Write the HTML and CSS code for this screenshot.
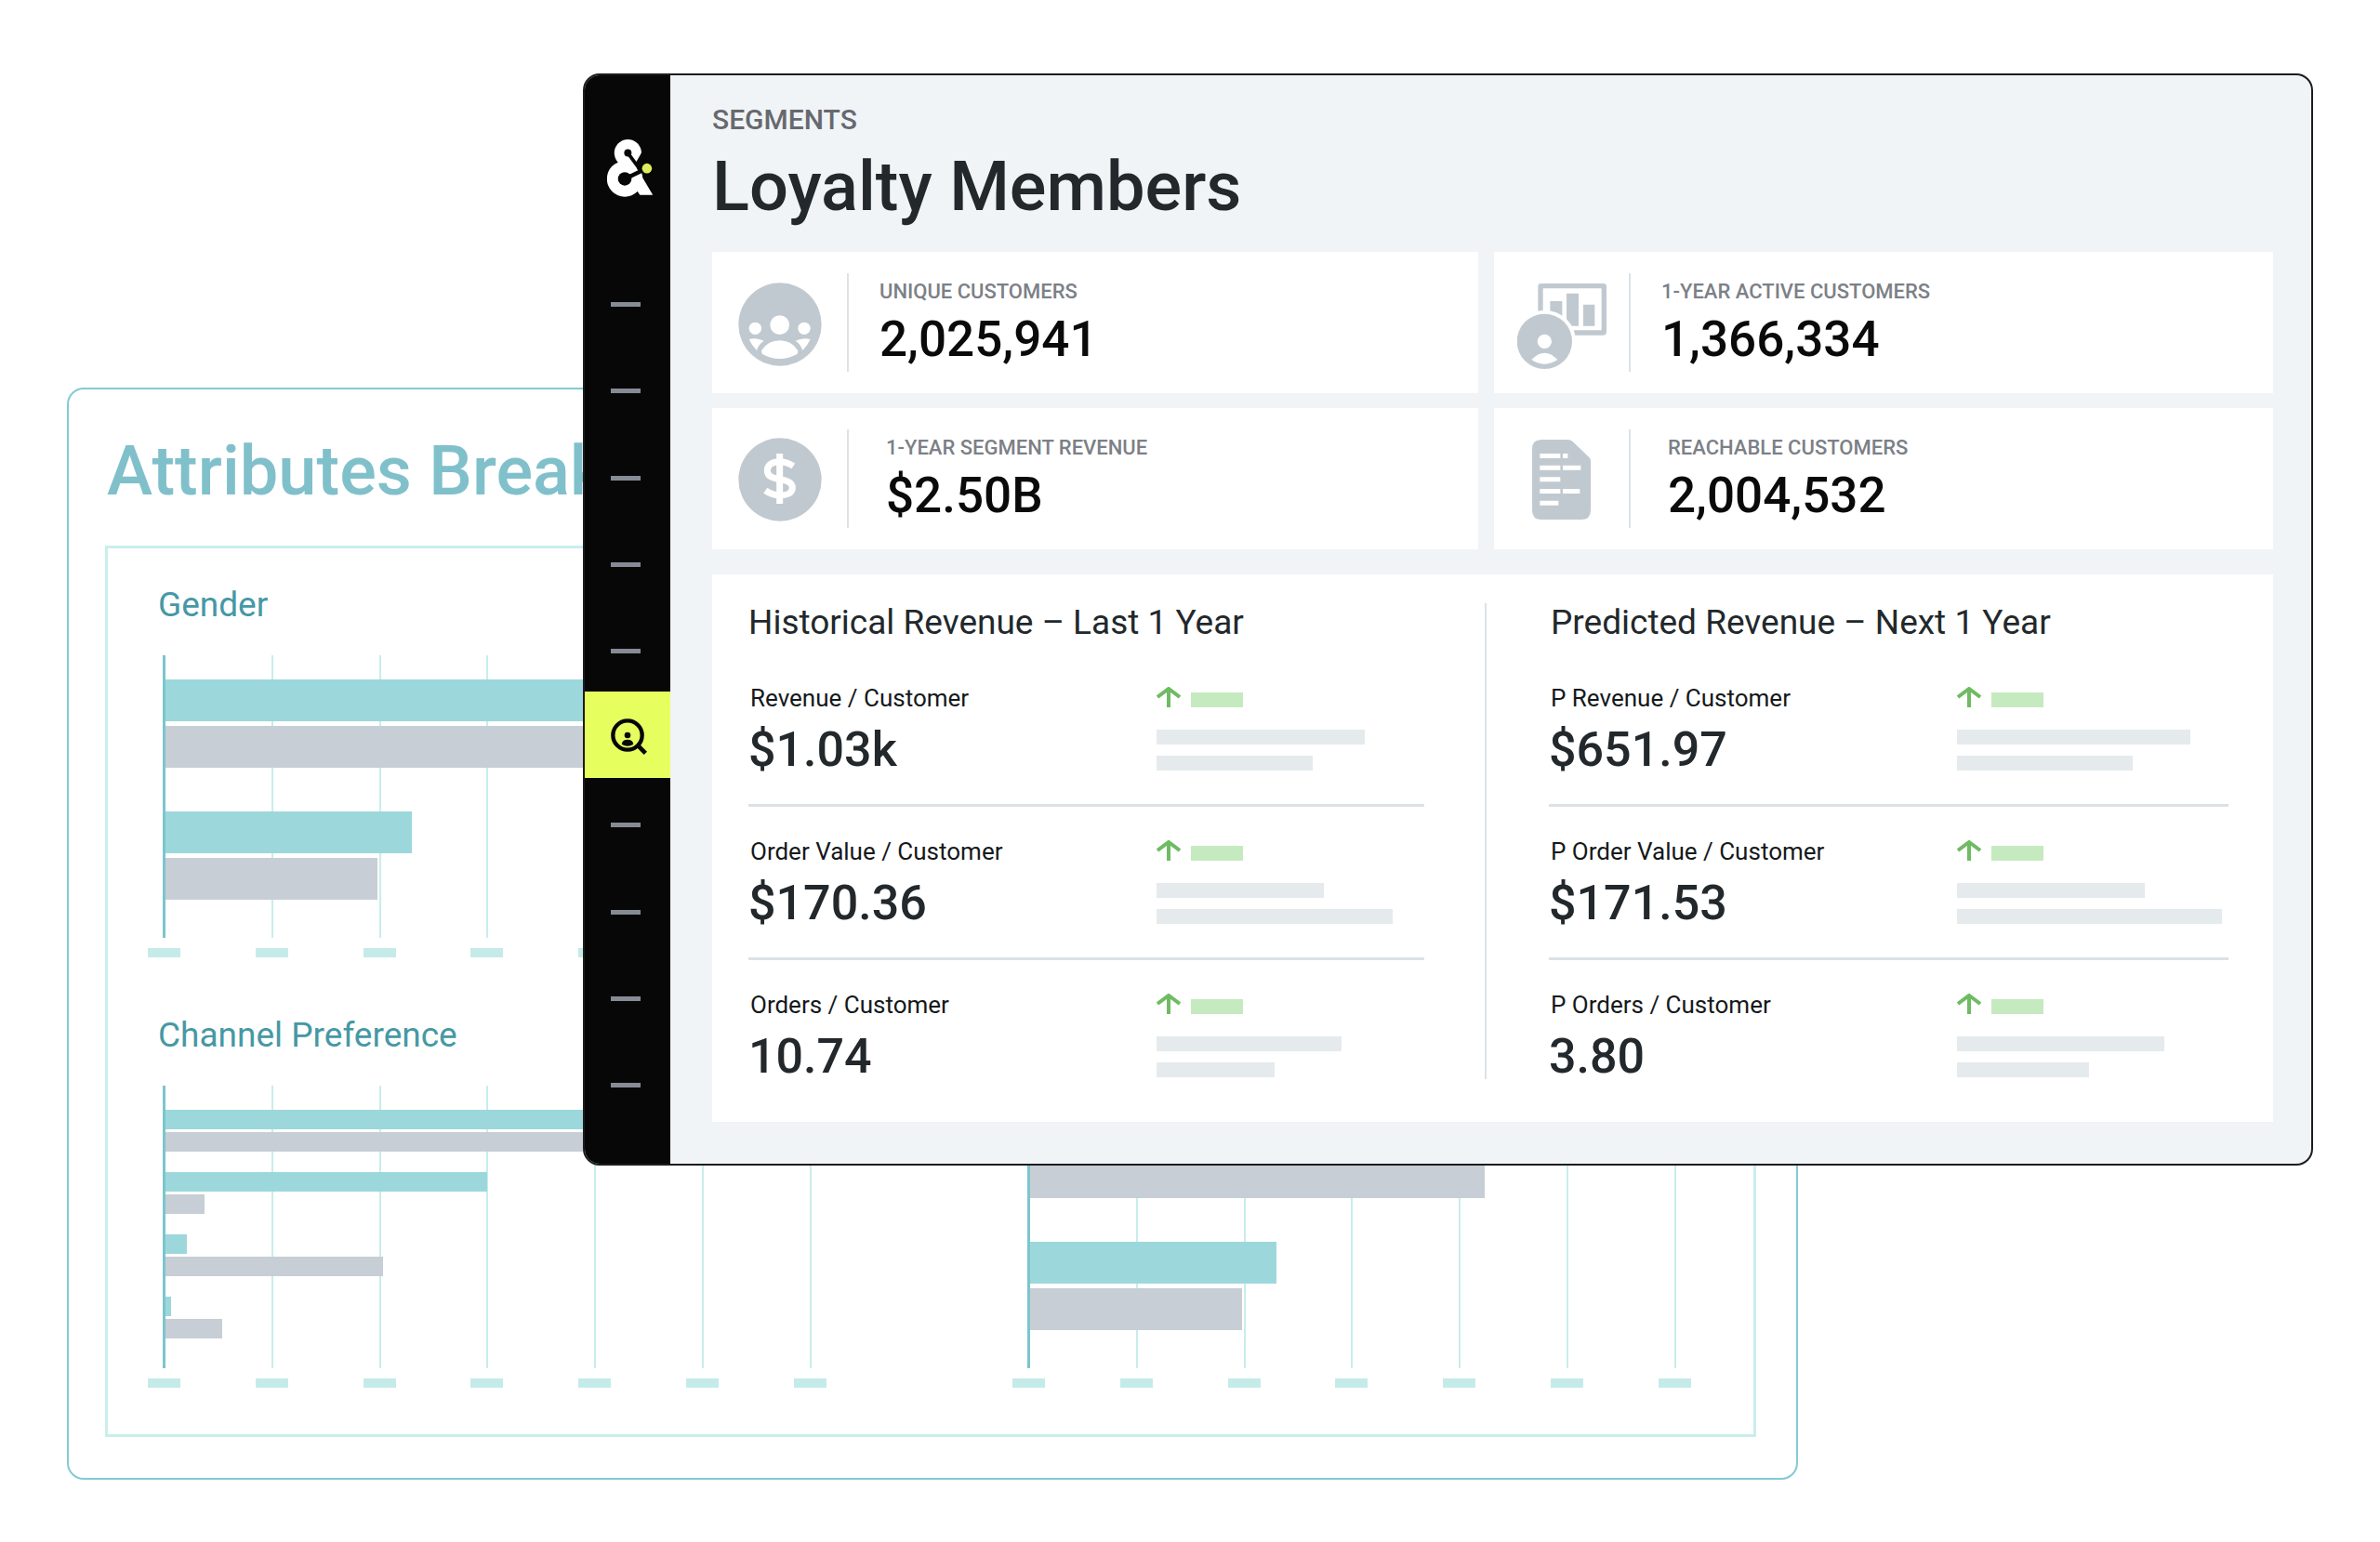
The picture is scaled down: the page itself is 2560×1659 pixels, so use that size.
FILE: index.html
```html
<!DOCTYPE html>
<html lang="en">
<head>
<meta charset="utf-8">
<meta name="viewport" content="width=device-width, initial-scale=1">
<title>Loyalty Members</title>
<link rel="stylesheet" href="styles.css">
</head>
<body>
<main class="stage">

  <section class="window attributes">
    <h2 class="title attributes-title">Attributes Break</h2>
    <div class="attributes-panel">
      <article class="chart">
        <h3 class="chart-title">Gender</h3>
        <div class="plot">
          <div class="grid-lines"><i class="axis"></i><i></i><i></i><i></i><i></i><i></i><i></i></div>
          <div class="bars bars-large">
            <div class="pair"><span class="bar" style="width:75%"></span><span class="bar base" style="width:70.3%"></span></div>
            <div class="pair"><span class="bar" style="width:38.1%"></span><span class="bar base" style="width:32.8%"></span></div>
          </div>
        </div>
        <div class="ticks"><i></i><i></i><i></i><i></i><i></i><i></i><i></i></div>
      </article>
      <article class="chart chart-second-row">
        <h3 class="chart-title">Channel Preference</h3>
        <div class="plot">
          <div class="grid-lines"><i class="axis"></i><i></i><i></i><i></i><i></i><i></i><i></i></div>
          <div class="bars bars-small">
            <div class="pair"><span class="bar" style="width:75%"></span><span class="bar base" style="width:70%"></span></div>
            <div class="pair"><span class="bar" style="width:49.8%"></span><span class="bar base" style="width:6.1%"></span></div>
            <div class="pair"><span class="bar" style="width:3.3%"></span><span class="bar base" style="width:33.7%"></span></div>
            <div class="pair"><span class="bar" style="width:0.9%"></span><span class="bar base" style="width:8.8%"></span></div>
          </div>
        </div>
        <div class="ticks"><i></i><i></i><i></i><i></i><i></i><i></i><i></i></div>
      </article>
      <article class="chart chart-second-row chart-untitled">
        <div class="plot">
          <div class="grid-lines"><i class="axis"></i><i></i><i></i><i></i><i></i><i></i><i></i></div>
          <div class="bars bars-large">
            <div class="pair"><span class="bar" style="width:75%"></span><span class="bar base" style="width:70.3%"></span></div>
            <div class="pair"><span class="bar" style="width:38.1%"></span><span class="bar base" style="width:32.8%"></span></div>
          </div>
        </div>
        <div class="ticks"><i></i><i></i><i></i><i></i><i></i><i></i><i></i></div>
      </article>
    </div>
  </section>

  <section class="window segments">
    <aside class="sidebar">
      <svg class="logo" viewBox="0 0 150 187" aria-hidden="true">
        <circle cx="67" cy="44" r="44" fill="#fff"/>
        <circle cx="57" cy="128" r="58" fill="#fff"/>
        <path d="M88 84 L111 44 L118 84 L104 112 Z" fill="#070707"/>
        <path d="M60 50 L84 50 L98 98 L110 116 L148 180 H106 L98 168 L70 100 Z" fill="#fff"/>
        <path d="M67 44 L103 93" stroke="#070707" stroke-width="11"/>
        <path d="M57 128 L112 102" stroke="#070707" stroke-width="13"/>
        <circle cx="67" cy="44" r="12" fill="#070707"/>
        <circle cx="57" cy="128" r="22" fill="#070707"/>
        <circle cx="129" cy="94" r="16" fill="#dcee5c"/>
      </svg>
      <nav class="nav">
        <button class="nav-item" type="button"></button>
        <button class="nav-item" type="button"></button>
        <button class="nav-item" type="button"></button>
        <button class="nav-item" type="button"></button>
        <button class="nav-item" type="button"></button>
        <button class="nav-item active" type="button">
          <svg class="nav-icon" viewBox="0 0 117 117" aria-hidden="true">
            <circle cx="54" cy="54" r="47" fill="none" stroke="#070707" stroke-width="13"/>
            <path d="M86 86 L112 112" stroke="#070707" stroke-width="14"/>
            <circle cx="54" cy="54" r="10" fill="#070707"/>
            <path d="M35 83 Q37 68 54 68 Q71 68 73 83 Q54 95 35 83 Z" fill="#070707"/>
          </svg>
        </button>
        <button class="nav-item" type="button"></button>
        <button class="nav-item" type="button"></button>
        <button class="nav-item" type="button"></button>
        <button class="nav-item" type="button"></button>
      </nav>
    </aside>

    <div class="content">
      <p class="eyebrow">SEGMENTS</p>
      <h1 class="title">Loyalty Members</h1>

      <div class="cards">
        <article class="card">
          <div class="card-icon">
            <svg width="90" height="90" viewBox="0 0 270 270" aria-hidden="true">
              <circle cx="135" cy="135" r="134" fill="#c1c9d0"/>
              <g fill="#fff">
                <circle cx="134" cy="137" r="31"/>
                <circle cx="55" cy="148" r="20"/>
                <circle cx="213" cy="148" r="20"/>
                <path d="M75 220 Q95 187 134 187 Q173 187 193 220 L191 230 Q134 262 77 230 Z"/>
                <path d="M35 183 Q60 176 83 188 Q65 200 60 219 Q44 203 35 183 Z"/>
                <path d="M233 183 Q208 176 185 188 Q203 200 208 219 Q224 203 233 183 Z"/>
              </g>
            </svg>
          </div>
          <div class="card-text">
            <p class="card-label">UNIQUE CUSTOMERS</p>
            <p class="card-value">2,025,941</p>
          </div>
        </article>
        <article class="card">
          <div class="card-icon">
            <svg width="96" height="96" viewBox="0 -12 288 288" aria-hidden="true">
              <rect x="75" y="8" width="205" height="151" rx="2" fill="none" stroke="#c1c9d0" stroke-width="16"/>
              <path d="M106 57h39v80h-39zM159 32h39v105h-39zM213 68h37v69h-37z" fill="#c1c9d0"/>
              <circle cx="88" cy="187" r="101" fill="#fff"/>
              <circle cx="88" cy="187" r="89" fill="#c1c9d0"/>
              <circle cx="88" cy="187" r="23" fill="#fff"/>
              <path d="M46 246 Q88 202 130 246 Q88 274 46 246 Z" fill="#fff"/>
            </svg>
          </div>
          <div class="card-text">
            <p class="card-label">1-YEAR ACTIVE CUSTOMERS</p>
            <p class="card-value">1,366,334</p>
          </div>
        </article>
        <article class="card card-wide-gap">
          <div class="card-icon">
            <svg width="90" height="90" viewBox="0 0 270 270" aria-hidden="true">
              <circle cx="135" cy="135" r="134" fill="#c1c9d0"/>
              <path d="M178 91 Q156 77 134 77 C104 77 94 92 94 106 C94 128 116 130 134 134 C158 139 175 143 175 161 C175 180 154 186 134 186 Q108 185 88 170" fill="none" stroke="#fff" stroke-width="21"/>
              <path d="M134 51 V213" stroke="#fff" stroke-width="21"/>
            </svg>
          </div>
          <div class="card-text">
            <p class="card-label">1-YEAR SEGMENT REVENUE</p>
            <p class="card-value">$2.50B</p>
          </div>
        </article>
        <article class="card card-wide-gap">
          <div class="card-icon">
            <svg width="63" height="86" viewBox="0 0 189 258" aria-hidden="true">
              <path d="M30 0 H116 Q124 0 130 5 L184 57 Q189 62 189 69 V228 Q189 258 159 258 H30 Q0 258 0 228 V30 Q0 0 30 0 Z" fill="#c1c9d0"/>
              <path d="M25 45h66v15h-66zM99 45h16v15h-16zM25 83h66v15h-66zM99 83h58v15h-58zM25 121h66v15h-66zM25 159h66v15h-66zM99 159h55v15h-55zM25 197h60v15h-60z" fill="#fff"/>
            </svg>
          </div>
          <div class="card-text">
            <p class="card-label">REACHABLE CUSTOMERS</p>
            <p class="card-value">2,004,532</p>
          </div>
        </article>
      </div>

      <div class="revenue">
        <section class="revenue-col">
          <h2 class="revenue-title">Historical Revenue – Last 1 Year</h2>
          <div class="metric">
            <div class="metric-text"><p class="metric-label">Revenue / Customer</p><p class="metric-value">$1.03k</p></div>
            <div class="trend">
              <div class="trend-head"><svg class="arrow" viewBox="0 0 26 22" aria-hidden="true"><path d="M13 22V2M1 11L13 2L25 11"/></svg><span class="pill"></span></div>
              <span class="line" style="width:77.8%"></span><span class="line" style="width:58.3%"></span>
            </div>
          </div>
          <div class="metric">
            <div class="metric-text"><p class="metric-label">Order Value / Customer</p><p class="metric-value">$170.36</p></div>
            <div class="trend">
              <div class="trend-head"><svg class="arrow" viewBox="0 0 26 22" aria-hidden="true"><path d="M13 22V2M1 11L13 2L25 11"/></svg><span class="pill"></span></div>
              <span class="line" style="width:62.5%"></span><span class="line" style="width:88.2%"></span>
            </div>
          </div>
          <div class="metric">
            <div class="metric-text"><p class="metric-label">Orders / Customer</p><p class="metric-value">10.74</p></div>
            <div class="trend">
              <div class="trend-head"><svg class="arrow" viewBox="0 0 26 22" aria-hidden="true"><path d="M13 22V2M1 11L13 2L25 11"/></svg><span class="pill"></span></div>
              <span class="line" style="width:69.1%"></span><span class="line" style="width:44.1%"></span>
            </div>
          </div>
        </section>
        <div class="divider"></div>
        <section class="revenue-col revenue-col-predicted">
          <h2 class="revenue-title">Predicted Revenue – Next 1 Year</h2>
          <div class="metric">
            <div class="metric-text"><p class="metric-label">P Revenue / Customer</p><p class="metric-value">$651.97</p></div>
            <div class="trend">
              <div class="trend-head"><svg class="arrow" viewBox="0 0 26 22" aria-hidden="true"><path d="M13 22V2M1 11L13 2L25 11"/></svg><span class="pill"></span></div>
              <span class="line" style="width:85.9%"></span><span class="line" style="width:64.6%"></span>
            </div>
          </div>
          <div class="metric">
            <div class="metric-text"><p class="metric-label">P Order Value / Customer</p><p class="metric-value">$171.53</p></div>
            <div class="trend">
              <div class="trend-head"><svg class="arrow" viewBox="0 0 26 22" aria-hidden="true"><path d="M13 22V2M1 11L13 2L25 11"/></svg><span class="pill"></span></div>
              <span class="line" style="width:69.1%"></span><span class="line" style="width:97.6%"></span>
            </div>
          </div>
          <div class="metric">
            <div class="metric-text"><p class="metric-label">P Orders / Customer</p><p class="metric-value">3.80</p></div>
            <div class="trend">
              <div class="trend-head"><svg class="arrow" viewBox="0 0 26 22" aria-hidden="true"><path d="M13 22V2M1 11L13 2L25 11"/></svg><span class="pill"></span></div>
              <span class="line" style="width:76.3%"></span><span class="line" style="width:48.8%"></span>
            </div>
          </div>
        </section>
      </div>
    </div>
  </section>

</main>
</body>
</html>
```
FILE: styles.css
```css
* {
  box-sizing: border-box;
}

body {
  margin: 0;
  background: #fff;
  color: #22282b;
  font-family: Roboto, "Liberation Sans", sans-serif;
}

h1, h2, h3, p {
  margin: 0;
  font-weight: 400;
}

/* Both windows share one grid cell and are offset by their margins. */
.stage {
  display: grid;
  align-items: start;
  padding: 79px 72px 67px;
}

.window {
  grid-area: 1 / 1;
  border-radius: 18px;
  overflow: hidden;
}

.title {
  font-size: 74px;
  line-height: 88px;
  font-weight: 500;
}

/* Attributes window */
.attributes {
  margin: 338px 554px 0 0;
  padding: 44px 43px 44px 39px;
  border: 2px solid #83cad4;
  background: #fff;
}

.attributes-title {
  margin-bottom: 36px;
  padding-left: 2px;
  color: #80c0cb;
}

.attributes-panel {
  display: grid;
  grid-template-columns: 1fr 1fr;
  column-gap: 200px;
  row-gap: 62px;
  padding: 39px 67px 50px 43px;
  border: 3px solid #c8eeec;
}

.chart-second-row {
  grid-row: 2;
}

.chart-untitled {
  grid-column: 2;
  align-self: end;
}

.chart-title {
  margin-bottom: 32px;
  padding-left: 11px;
  color: #4698a5;
  font-size: 37px;
  line-height: 44px;
}

.plot {
  display: grid;
  height: 304px;
  margin: 0 16px 11px;
}

.grid-lines {
  grid-area: 1 / 1;
  display: flex;
  justify-content: space-between;
}

.grid-lines i {
  width: 2px;
  background: #c8edec;
}

.grid-lines .axis {
  width: 3px;
  background: #7cc5ce;
}

.bars {
  grid-area: 1 / 1;
  display: flex;
  flex-direction: column;
  padding: 26px 0 0 3px;
}

.pair {
  display: flex;
  flex-direction: column;
}

.bar {
  background: #9cd8db;
}

.bar.base {
  background: #c7ced5;
}

.bars-large {
  gap: 47px;
}

.bars-large .pair {
  gap: 5px;
}

.bars-large .bar {
  height: 45px;
}

.bars-small {
  gap: 22px;
}

.bars-small .pair {
  gap: 3px;
}

.bars-small .bar {
  height: 21px;
}

.ticks {
  display: flex;
  justify-content: space-between;
}

.ticks i {
  width: 35px;
  height: 10px;
  background: #c5ebe9;
}

/* Segments window */
.segments {
  display: flex;
  margin-left: 555px;
  border: 2px solid #1c1c1e;
  background: #f0f4f7;
}

.sidebar {
  display: flex;
  flex: 0 0 92px;
  flex-direction: column;
  padding: 69px 0 41px;
  background: #070707;
}

.logo {
  width: 50px;
  height: 62px;
  margin: 0 0 65px 24px;
}

.nav {
  display: flex;
  flex: 1;
  flex-direction: column;
}

.nav-item {
  display: flex;
  flex: 1;
  align-items: center;
  justify-content: center;
  padding: 7px 4px 0 0;
  border: 0;
  background: none;
}

.nav-item::before {
  content: "";
  width: 32px;
  height: 5px;
  background: #868b95;
}

.nav-item.active {
  padding: 5px 0 2px 3px;
  background: #e7ff5e;
}

.nav-item.active::before {
  content: none;
}

.nav-icon {
  width: 39px;
  height: 39px;
}

.content {
  flex: 1;
  min-width: 0;
  padding: 30px 41px 45px 45px;
}

.eyebrow {
  margin-bottom: 10px;
  color: #66696e;
  font-size: 30px;
  line-height: 36px;
  font-weight: 500;
}

.cards {
  display: grid;
  grid-template-columns: 824fr 838fr;
  gap: 16px 17px;
  margin: 26px 0 27px;
}

.card {
  display: flex;
  align-items: center;
  height: 152px;
  background: #fff;
}

.card-icon {
  display: flex;
  flex: 0 0 147px;
  align-items: center;
  justify-content: center;
  height: 106px;
  padding-top: 4px;
  border-right: 2px solid #dbe2e6;
}

.card-text {
  padding-left: 33px;
}

.card-wide-gap .card-icon {
  padding-top: 1px;
}

.card-wide-gap .card-text {
  padding-left: 40px;
}

.card-label {
  margin-bottom: 7px;
  color: #7c8087;
  font-size: 22px;
  line-height: 28px;
  font-weight: 500;
}

.card-value {
  color: #0a0a0a;
  font-size: 53px;
  line-height: 60px;
  font-weight: 500;
}

.revenue {
  display: grid;
  grid-template-columns: 831fr 2px 846fr;
  background: #fff;
}

.divider {
  margin: 31px 0 46px;
  background: #dbe2e6;
}

.revenue-col {
  padding: 30px 65px 40px 39px;
}

.revenue-col-predicted {
  padding-right: 48px;
  padding-left: 67px;
}

.revenue-title {
  margin-bottom: 11px;
  font-size: 37px;
  line-height: 44px;
}

.revenue-col-predicted .revenue-title {
  padding-left: 2px;
}

.metric {
  display: grid;
  grid-template-columns: 439px 1fr;
  padding: 32px 0 28px;
  border-bottom: 3px solid #dbe2e5;
}

.metric:last-child {
  padding-bottom: 0;
  border-bottom: 0;
}

.metric-label {
  margin-bottom: 10px;
  padding-left: 2px;
  color: #15191b;
  font-size: 26px;
  line-height: 32px;
}

.metric-value {
  font-size: 52px;
  line-height: 60px;
  font-weight: 500;
}

.trend {
  display: flex;
  flex-direction: column;
  gap: 12px;
  padding-top: 4px;
}

.trend-head {
  display: flex;
  align-items: flex-end;
  gap: 11px;
  margin-bottom: 12px;
}

.arrow {
  width: 26px;
  height: 22px;
  fill: none;
  stroke: #6fbb62;
  stroke-width: 4;
}

.pill {
  width: 56px;
  height: 16px;
  background: #c5eabf;
}

.line {
  height: 16px;
  background: #e5eaed;
}
```
